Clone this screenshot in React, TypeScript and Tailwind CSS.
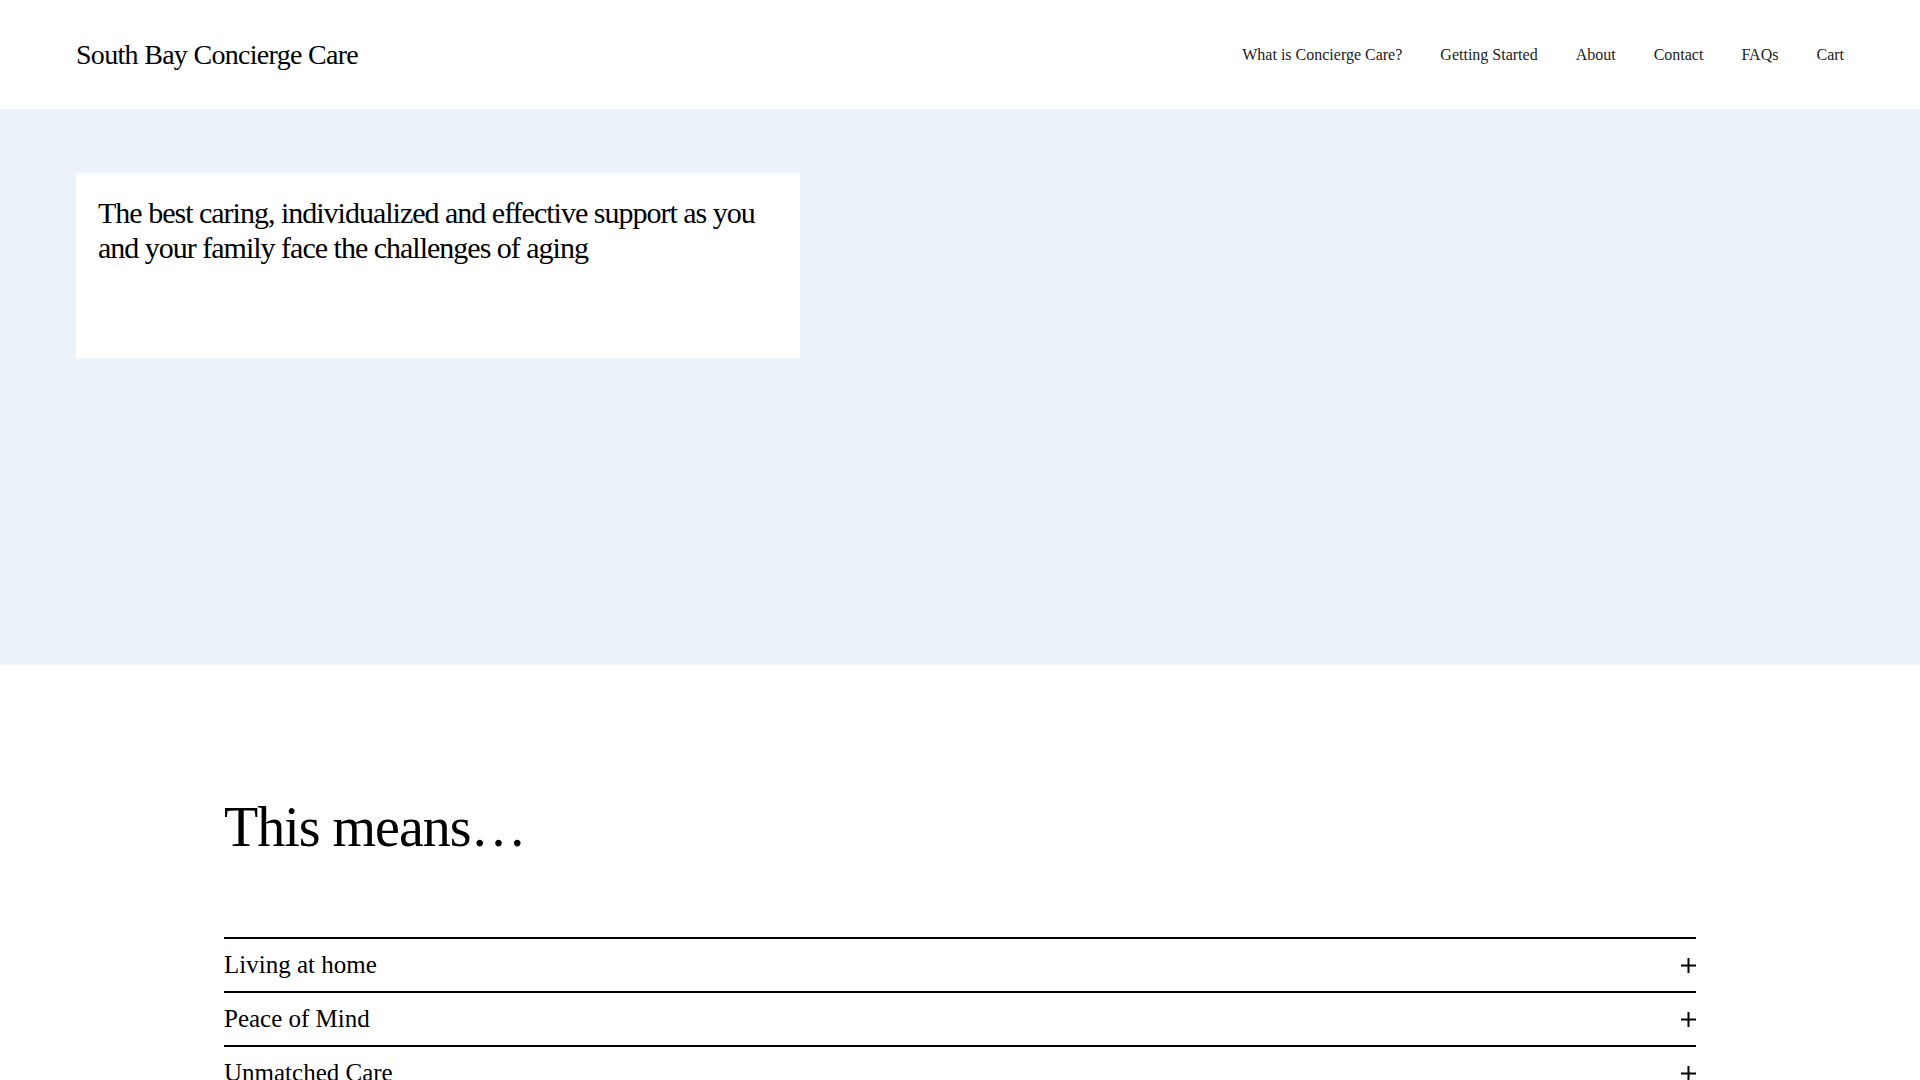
export default function App() {
  const nav = ["What is Concierge Care?", "Getting Started", "About", "Contact", "FAQs", "Cart"];
  const items = ["Living at home", "Peace of Mind", "Unmatched Care", "Trusted Partners"];
  return (
    <div className="h-screen overflow-y-scroll bg-white text-black" style={{ fontFamily: '"Liberation Serif", "Times New Roman", serif' }}>
      <div className="min-h-[1400px]">
        <header className="h-[109px] flex items-center justify-between px-[76px]">
          <div className="text-[28px] tracking-[-0.7px]">South Bay Concierge Care</div>
          <nav className="flex items-center gap-[38px] text-[16px]">
            {nav.map((n) => (
              <a key={n} href="#" className="text-[#222]">{n}</a>
            ))}
          </nav>
        </header>
        <section className="h-[556px] bg-[#eaf3f9] px-[76px] pt-[64px]">
          <div className="w-[724px] h-[185px] bg-white px-[22px] pt-[22px]">
            <p className="text-[30px] leading-[35px] tracking-[-1px]">
              The best caring, individualized and effective support as you and your family face the challenges of aging
            </p>
          </div>
        </section>
        <section className="px-[224px] pt-[134px]">
          <h2 className="text-[56px] leading-[1] tracking-[-1px] mb-[82px]">This means…</h2>
          <div>
            {items.map((t) => (
              <div key={t} className="border-t-2 border-black h-[54px] flex items-center justify-between">
                <span className="text-[25px]">{t}</span>
                <svg width="15" height="15" viewBox="0 0 15 15">
                  <path d="M7.5 0v15M0 7.5h15" stroke="black" strokeWidth="2" />
                </svg>
              </div>
            ))}
          </div>
        </section>
      </div>
    </div>
  );
}
